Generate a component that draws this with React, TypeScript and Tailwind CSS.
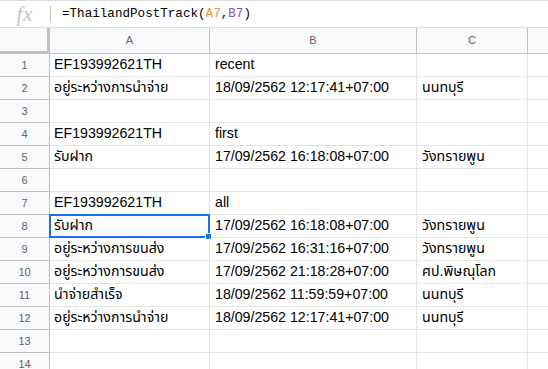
import React from "react";

type Row = [string, string, string];

const rows: Row[] = [
  ["EF193992621TH", "recent", ""],
  ["อยู่ระหว่างการนำจ่าย", "18/09/2562 12:17:41+07:00", "นนทบุรี"],
  ["", "", ""],
  ["EF193992621TH", "first", ""],
  ["รับฝาก", "17/09/2562 16:18:08+07:00", "วังทรายพูน"],
  ["", "", ""],
  ["EF193992621TH", "all", ""],
  ["รับฝาก", "17/09/2562 16:18:08+07:00", "วังทรายพูน"],
  ["อยู่ระหว่างการขนส่ง", "17/09/2562 16:31:16+07:00", "วังทรายพูน"],
  ["อยู่ระหว่างการขนส่ง", "17/09/2562 21:18:28+07:00", "ศป.พิษณุโลก"],
  ["นำจ่ายสำเร็จ", "18/09/2562 11:59:59+07:00", "นนทบุรี"],
  ["อยู่ระหว่างการนำจ่าย", "18/09/2562 12:17:41+07:00", "นนทบุรี"],
  ["", "", ""],
  ["", "", ""],
];

const font = "font-['Liberation_Sans','Noto_Sans_Thai','Noto_Sans',sans-serif]";

const App = () => {
  return (
    <div className={`w-[548px] h-[369px] overflow-hidden bg-white ${font}`}>
      {/* formula bar */}
      <div className="h-[28px] flex items-center border-t border-b border-[#dadce0]">
        <div className="w-[50px] flex justify-center">
          <span className="font-['Liberation_Serif',serif] italic text-[20px] text-[#c4c4c4] tracking-[1px]">
            fx
          </span>
        </div>
        <div className="w-px h-[16px] bg-[#c8c8c8]" />
        <div className="pl-[11px] font-['Liberation_Mono',monospace] text-[12.6px] text-black">
          =ThailandPostTrack(<span className="text-[#e8923c]">A7</span>,
          <span className="text-[#8a4fb8]">B7</span>)
        </div>
      </div>

      {/* column header */}
      <div className="flex h-[26px] bg-[#f8f9fa] border-b border-[#c0c0c0] text-[11px] text-[#5f6368]">
        <div className="w-[50px] shrink-0 border-r-[3px] border-b-[2px] border-[#c0c0c0] bg-[#f8f9fa]" />
        <div className="w-[160px] shrink-0 flex items-center justify-center border-r border-[#c0c0c0]">A</div>
        <div className="w-[207px] shrink-0 flex items-center justify-center border-r border-[#c0c0c0]">B</div>
        <div className="w-[111px] shrink-0 flex items-center justify-center border-r border-[#c0c0c0]">C</div>
        <div className="flex-1" />
      </div>

      {/* rows */}
      {rows.map((r, i) => (
        <div key={i} className="flex h-[23px] text-[14.2px] text-black">
          <div className="w-[50px] shrink-0 flex items-center justify-center bg-[#f8f9fa] border-r border-b border-[#c0c0c0] text-[11px] text-[#5f6368]">
            {i + 1}
          </div>
          <div className="relative w-[160px] shrink-0 flex items-center pl-[4px] border-r border-b border-[#e2e3e3] whitespace-nowrap overflow-visible">
            {r[0]}
            {i === 7 && (
              <>
                <div className="absolute -left-px -top-px w-[161px] h-[24px] border-2 border-[#1a73e8]" />
                <div className="absolute left-[155px] top-[18px] w-[7px] h-[7px] bg-[#1a73e8] border border-white" />
              </>
            )}
          </div>
          <div className="w-[207px] shrink-0 flex items-center pl-[5px] border-r border-b border-[#e2e3e3] whitespace-nowrap overflow-hidden">
            {r[1]}
          </div>
          <div className="w-[111px] shrink-0 flex items-center pl-[5px] border-r border-b border-[#e2e3e3] whitespace-nowrap overflow-hidden">
            {r[2]}
          </div>
          <div className="flex-1 border-b border-[#e2e3e3]" />
        </div>
      ))}
    </div>
  );
};

export default App;
